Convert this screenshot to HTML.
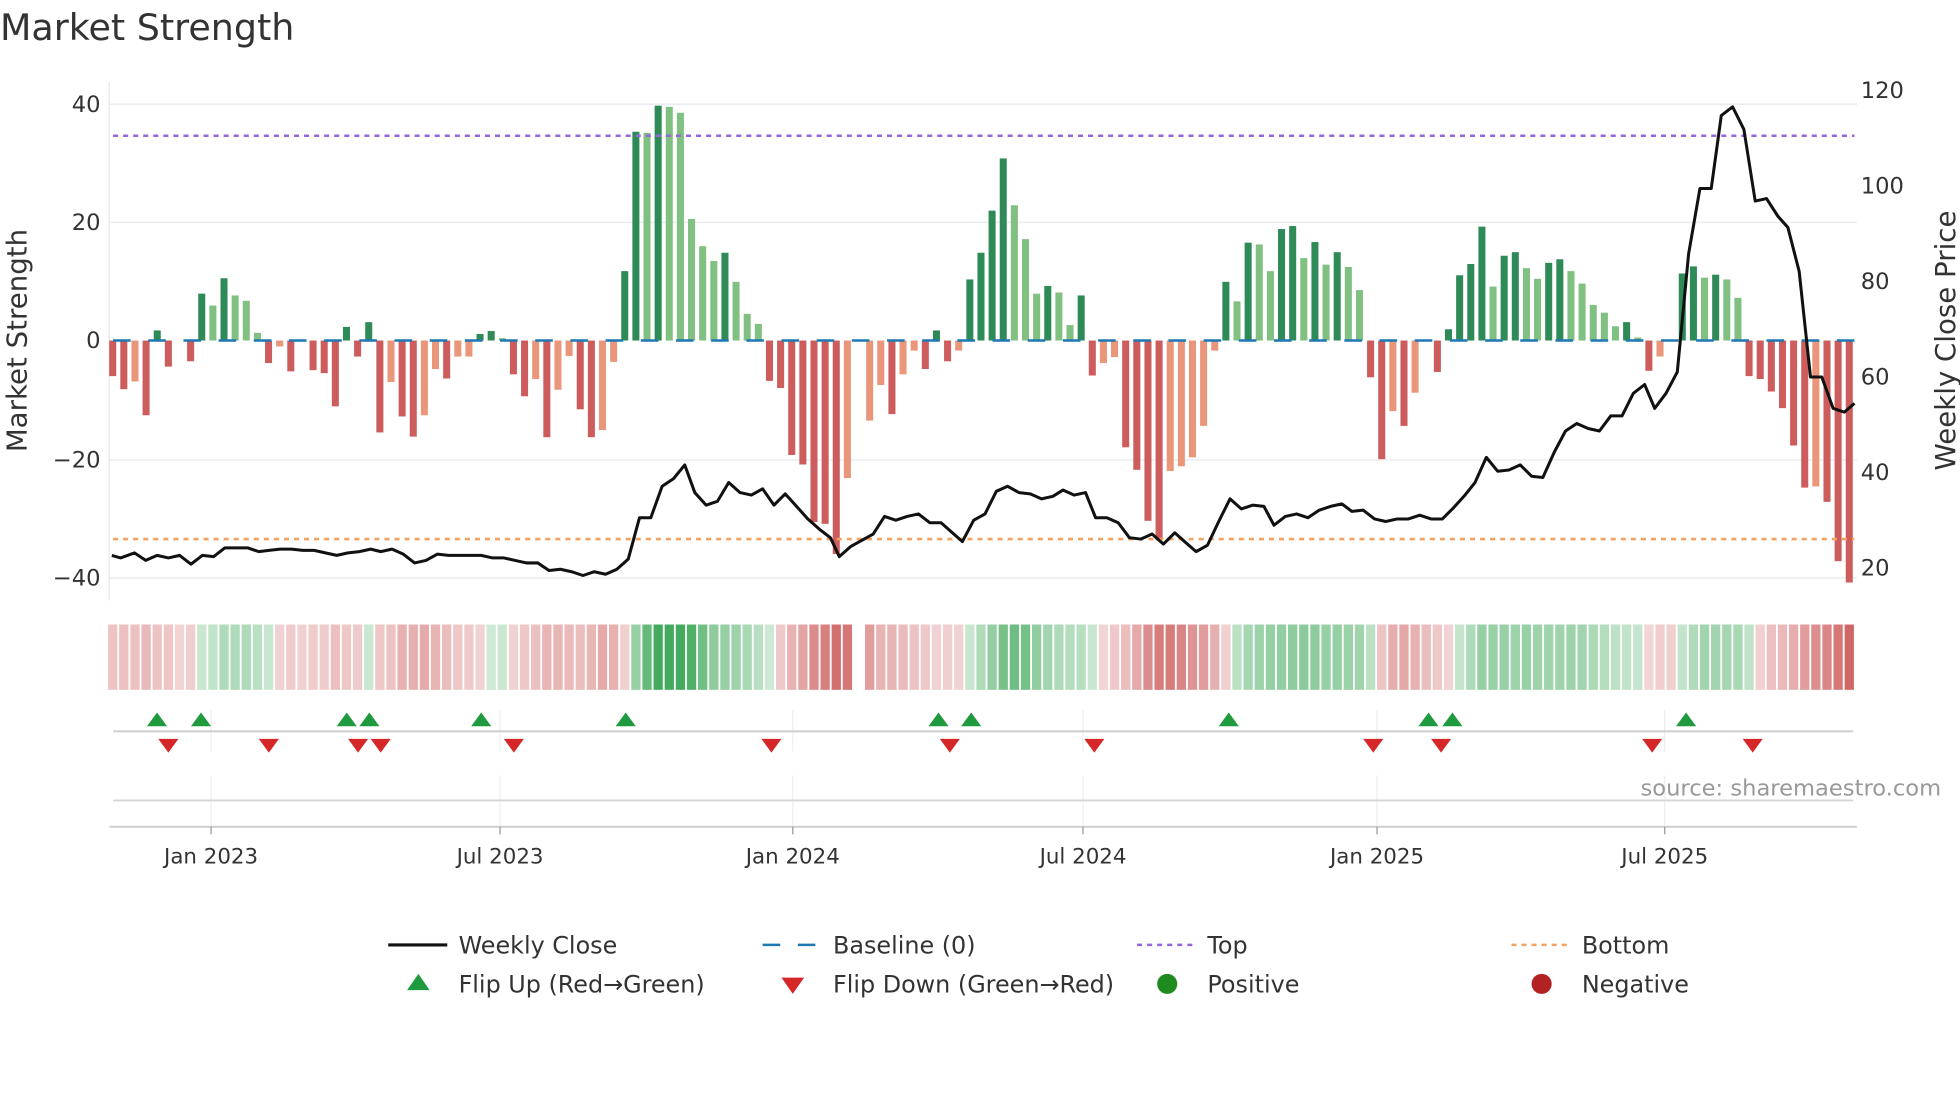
<!DOCTYPE html>
<html><head><meta charset="utf-8"><style>
html,body{margin:0;padding:0;background:#fff;}
svg{display:block;font-family:"DejaVu Sans","Liberation Sans",sans-serif;}
</style></head><body>
<svg id="s" width="1960" height="1102" viewBox="0 0 1560 877" preserveAspectRatio="none" xmlns="http://www.w3.org/2000/svg">
<rect width="1560" height="877" fill="#fff"/>
<text x="0" y="32" font-size="29" fill="#333">Market Strength</text>
<g stroke="#ececf0" stroke-width="1.2">
<line x1="87" y1="83" x2="1478" y2="83"/>
<line x1="87" y1="177" x2="1478" y2="177"/>
<line x1="87" y1="366" x2="1478" y2="366"/>
<line x1="87" y1="460" x2="1478" y2="460"/>
<line x1="87" y1="65" x2="87" y2="478"/>
</g>
<g id="bars"></g>
<line x1="90" y1="271" x2="1476" y2="271" stroke="#1f77b4" stroke-width="2" stroke-dasharray="14 14"/>
<line x1="90" y1="108" x2="1476" y2="108" stroke="#9467dd" stroke-width="2" stroke-dasharray="4 4"/>
<line x1="90" y1="429" x2="1476" y2="429" stroke="#f4a261" stroke-width="2" stroke-dasharray="4 4"/>
<polyline fill="none" stroke="#111" stroke-width="2.4" stroke-linejoin="round" points="89,442 96,444 107,440 116,446 125,442 134,444 143,442 152,449 161,442 170,443 179,436 188,436 197,436 206,439 214,438 223,437 232,437 241,438 250,438 259,440 268,442 277,440 286,439 295,437 303,439 312,437 321,441 330,448 339,446 348,441 357,442 366,442 375,442 383,442 392,444 401,444 410,446 419,448 428,448 437,454 446,453 455,455 464,458 473,455 482,457 491,453 500,445 509,412 518,412 527,387 536,381 545,370 553,392 562,402 571,399 580,384 589,392 598,394 607,389 616,402 625,393 634,403 643,413 652,421 661,428 668,443 677,435 686,430 695,425 704,411 713,414 722,411 731,409 740,416 749,416 758,424 766,431 775,414 784,409 793,391 802,387 811,392 820,393 829,397 838,395 846,390 855,394 864,392 872,412 881,412 890,416 899,428 908,429 917,425 926,433 935,424 944,432 952,439 961,434 970,415 979,397 988,405 997,402 1006,403 1014,418 1023,411 1032,409 1041,412 1050,406 1059,403 1068,401 1076,407 1085,406 1094,413 1103,415 1112,413 1121,413 1130,410 1139,413 1148,413 1157,404 1166,394 1174,384 1183,364 1192,375 1201,374 1210,370 1219,379 1228,380 1237,360 1246,343 1255,337 1264,341 1273,343 1282,331 1291,331 1300,313 1309,306 1317,325 1326,313 1335,296 1344,202 1353,150 1362,150 1370,92 1379,85 1388,103 1397,160 1406,158 1415,172 1423,181 1432,216 1441,300 1450,300 1459,325 1468,328 1476,321"/>
<g font-size="18" fill="#333" text-anchor="end">
<text x="80" y="89">40</text><text x="80" y="183">20</text><text x="80" y="277">0</text>
<text x="80" y="372">−20</text><text x="80" y="466">−40</text>
</g>
<g font-size="18" fill="#333">
<text x="1481" y="78">120</text><text x="1481" y="154">100</text><text x="1481" y="230">80</text>
<text x="1481" y="306">60</text><text x="1481" y="382">40</text><text x="1481" y="458">20</text>
</g>
<text transform="translate(21,271) rotate(-90)" font-size="22" fill="#333" text-anchor="middle">Market Strength</text>
<text transform="translate(1556,271) rotate(-90)" font-size="22" fill="#333" text-anchor="middle">Weekly Close Price</text>
<g id="heat"></g>
<g stroke="#eee" stroke-width="1">
<line x1="168" y1="565" x2="168" y2="598"/><line x1="398" y1="565" x2="398" y2="598"/><line x1="631" y1="565" x2="631" y2="598"/><line x1="862" y1="565" x2="862" y2="598"/><line x1="1096" y1="565" x2="1096" y2="598"/><line x1="1325" y1="565" x2="1325" y2="598"/>
<line x1="168" y1="617" x2="168" y2="658"/><line x1="398" y1="617" x2="398" y2="658"/><line x1="631" y1="617" x2="631" y2="658"/><line x1="862" y1="617" x2="862" y2="658"/><line x1="1096" y1="617" x2="1096" y2="658"/><line x1="1325" y1="617" x2="1325" y2="658"/>
</g>
<line x1="90" y1="582" x2="1475" y2="582" stroke="#ccc" stroke-width="1.5"/>
<line x1="90" y1="637" x2="1475" y2="637" stroke="#d5d5d5" stroke-width="1.5"/>
<line x1="87" y1="658" x2="1478" y2="658" stroke="#ccc" stroke-width="1.5"/>
<g stroke="#999" stroke-width="1">
<line x1="168" y1="658" x2="168" y2="664"/><line x1="398" y1="658" x2="398" y2="664"/><line x1="631" y1="658" x2="631" y2="664"/><line x1="862" y1="658" x2="862" y2="664"/><line x1="1096" y1="658" x2="1096" y2="664"/><line x1="1325" y1="658" x2="1325" y2="664"/>
</g>
<g id="tri"></g>
<text x="1545" y="633" font-size="18" fill="#999" text-anchor="end">source: sharemaestro.com</text>
<g font-size="17" fill="#333" text-anchor="middle">
<text x="168" y="687">Jan 2023</text><text x="398" y="687">Jul 2023</text><text x="631" y="687">Jan 2024</text>
<text x="862" y="687">Jul 2024</text><text x="1096" y="687">Jan 2025</text><text x="1325" y="687">Jul 2025</text>
</g>
<line x1="309" y1="752" x2="356" y2="752" stroke="#111" stroke-width="2.5"/>
<line x1="607" y1="752" x2="652" y2="752" stroke="#1f77b4" stroke-width="2" stroke-dasharray="14 14"/>
<line x1="905" y1="752" x2="950" y2="752" stroke="#9467dd" stroke-width="2" stroke-dasharray="4 4"/>
<line x1="1203" y1="752" x2="1248" y2="752" stroke="#f4a261" stroke-width="2" stroke-dasharray="4 4"/>
<polygon points="324,788 342,788 333,775" fill="#1f9a3e"/>
<polygon points="622,778 640,778 631,791" fill="#d62728"/>
<circle cx="929" cy="783" r="8" fill="#1f8a1f"/>
<circle cx="1227" cy="783" r="8" fill="#b22222"/>
<g font-size="19" fill="#333">
<text x="365" y="759">Weekly Close</text><text x="663" y="759">Baseline (0)</text><text x="961" y="759">Top</text><text x="1259" y="759">Bottom</text>
<text x="365" y="790">Flip Up (Red→Green)</text><text x="663" y="790">Flip Down (Green→Red)</text><text x="961" y="790">Positive</text><text x="1259" y="790">Negative</text>
</g>
</svg>
<script>
var d="-6R,-8.2R,-6.9O,-12.6R,1.7D,-4.4R,0N,-3.5R,7.9D,5.9L,10.5D,7.6L,6.7L,1.3L,-3.8R,-1O,-5.2R,0N,-5R,-5.5R,-11.1R,2.3D,-2.7R,3.1D,-15.5R,-7O,-12.8R,-16.2R,-12.6O,-4.8O,-6.4R,-2.7O,-2.7O,1.1D,1.6D,0.4L,-5.7R,-9.4R,-6.5O,-16.3R,-8.3O,-2.6O,-11.6R,-16.3R,-15.1O,-3.6O,11.7D,35.2D,35L,39.6D,39.4L,38.4L,20.5L,15.9L,13.4L,14.8D,9.9L,4.5L,2.8L,-6.8R,-8R,-19.3R,-20.9R,-30.6R,-30.9R,-36R,-23.2O,0X,-13.5O,-7.5O,-12.4R,-5.7O,-1.7O,-4.8R,1.7D,-3.5R,-1.7O,10.3D,14.8D,21.9D,30.7D,22.8L,17.1L,7.9L,9.2D,8.1L,2.6L,7.6D,-5.9R,-3.8O,-2.8O,-18R,-21.8R,-30.4R,-33.7R,-22O,-21.2O,-19.7O,-14.4O,-1.7O,9.9D,6.6L,16.5D,16.2L,11.7L,18.8D,19.3D,13.9L,16.6D,12.8L,14.9D,12.4L,8.5L,-6.2R,-20R,-11.9O,-14.4R,-8.8O,0N,-5.3R,1.9D,11D,12.9D,19.2D,9.1L,14.3D,14.9D,12.2L,10.4L,13.1D,13.7D,11.7L,9.6L,6L,4.7L,2.4L,3.1D,0.5L,-5.1R,-2.7O,0N,11.3D,12.5D,10.6L,11.1D,10.3L,7.2L,-6R,-6.5R,-8.6R,-11.4R,-17.7R,-24.8R,-24.6O,-27.2R,-37.2R,-40.8R".split(",");
var col={D:"#2e8b57",L:"#80c080",R:"#cd5c5c",O:"#e9967a"};
var ns="http://www.w3.org/2000/svg",bars=document.getElementById("bars"),heat=document.getElementById("heat");
function r(g,x,y,w,h,f,o){var e=document.createElementNS(ns,"rect");e.setAttribute("x",x);e.setAttribute("y",y);e.setAttribute("width",w);e.setAttribute("height",h);e.setAttribute("fill",f);if(o!=null)e.setAttribute("fill-opacity",o);g.appendChild(e);}
var vals=[];
d.forEach(function(s,i){var c=s.slice(-1),v=parseFloat(s);vals.push(c=="X"?null:v);var x=89.7+i*8.86-2.8;
 if(col[c]&&v!=0){var h=Math.abs(v)*4.72;r(bars,x,v>0?271-h:271,5.6,h,col[c]);}});
for(var i=0;i<vals.length;i++){if(vals[i]===null)continue;var s=0,n=0;for(var k=i-2;k<=i;k++){if(k>=0&&vals[k]!==null){s+=vals[k];n++;}}var m=s/n;
 var o=Math.min(0.95,0.25+Math.abs(m)/36*0.7);var x=89.7+i*8.86-3.7;
 r(heat,x,497,7.4,52,m>=0?"#3aa655":"#cd5c5c",o);}
var tri=document.getElementById("tri");
[125,160,276,294,383,498,747,773,978,1137,1156,1342].forEach(function(x){var p=document.createElementNS(ns,"polygon");p.setAttribute("points",(x-8)+",578 "+(x+8)+",578 "+x+",567");p.setAttribute("fill","#1f9a3e");tri.appendChild(p);});
[134,214,285,303,409,614,756,871,1093,1147,1315,1395].forEach(function(x){var p=document.createElementNS(ns,"polygon");p.setAttribute("points",(x-8)+",588 "+(x+8)+",588 "+x+",599");p.setAttribute("fill","#d62728");tri.appendChild(p);});
</script>
</body></html>
